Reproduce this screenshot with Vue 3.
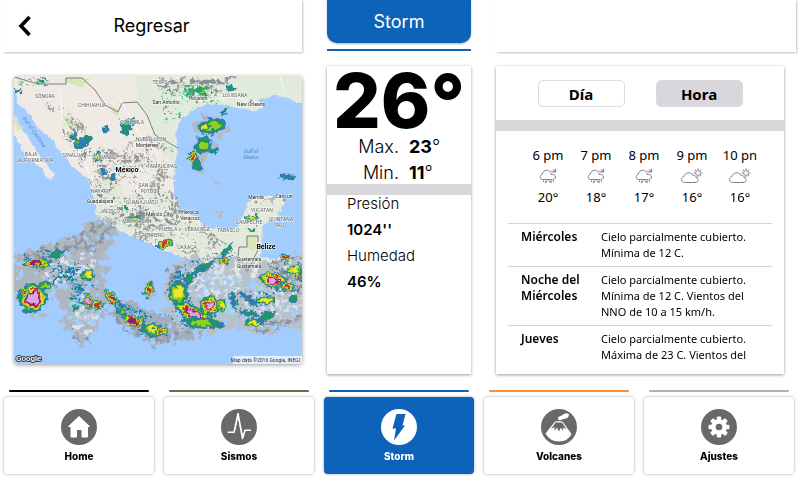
<script setup>
import { ref } from 'vue'

const mode = ref('hora')

const hours = [
  { time: '6 pm', temp: '20°', icon: 'rain' },
  { time: '7 pm', temp: '18°', icon: 'rain' },
  { time: '8 pm', temp: '17°', icon: 'rain' },
  { time: '9 pm', temp: '16°', icon: 'sun' },
  { time: '10 pn', temp: '16°', icon: 'sun' },
]

const forecast = [
  { day: 'Miércoles', text: 'Cielo parcialmente cubierto. Mínima de 12 C.' },
  { day: 'Noche del Miércoles', text: 'Cielo parcialmente cubierto. Mínima de 12 C. Vientos del NNO de 10 a 15 km/h.' },
  { day: 'Jueves', text: 'Cielo parcialmente cubierto. Máxima de 23 C. Vientos del' },
]

const tabs = [
  { id: 'home', label: 'Home' },
  { id: 'sismos', label: 'Sismos' },
  { id: 'storm', label: 'Storm' },
  { id: 'volcanes', label: 'Volcanes' },
  { id: 'ajustes', label: 'Ajustes' },
]

// Radar echoes: x, y, rx, ry, rotation, strongest band reached
const bands = ['#2f7fa8', '#1d9a5c', '#8fd020', '#f3e32a', '#c23530', '#8a1d86', '#d9a6e0']
const echoes = [
  [36, 263, 14, 4, -4, 6], [33, 298, 13, 14, 25, 7], [57, 254, 8, 3, -20, 2], [24, 292, 5, 4, 20, 5],
  [44, 286, 8, 3, -10, 3], [88, 275, 6, 5, 0, 4], [88, 301, 4, 8, -15, 7], [97, 305, 7, 4, 0, 5],
  [112, 298, 8, 4, 40, 6], [106, 292, 3, 2, 0, 3], [134, 321, 12, 5, 20, 6], [122, 312, 5, 3, 10, 3],
  [154, 330, 12, 6, 10, 4], [161, 331, 6, 4, 0, 5], [149, 290, 4, 7, 20, 5], [75, 307, 3, 3, 0, 3],
  [135, 219, 7, 3, 0, 4], [165, 244, 8, 4, -20, 5], [178, 293, 9, 11, 10, 4], [190, 278, 3, 9, 30, 2],
  [204, 267, 9, 4, -25, 2], [227, 250, 2, 9, 40, 2], [224, 260, 6, 3, 10, 5], [194, 314, 19, 7, 30, 7],
  [210, 306, 9, 9, 0, 7], [222, 305, 4, 7, 0, 4], [202, 323, 20, 5, 5, 3], [233, 300, 3, 8, -10, 1],
  [250, 300, 12, 3, 40, 1], [254, 323, 9, 4, 0, 4], [267, 316, 8, 4, -30, 2], [249, 313, 9, 3, 10, 2],
  [266, 300, 9, 4, 0, 4], [274, 280, 13, 7, 12, 7], [287, 287, 8, 4, 5, 5], [285, 257, 5, 3, 0, 5],
  [294, 270, 9, 3, -10, 4], [299, 277, 4, 3, 0, 5], [293, 298, 4, 3, 0, 2],
  [212, 126, 13, 7, -10, 3], [205, 127, 5, 3, -10, 4], [203, 145, 9, 7, -50, 3], [193, 157, 5, 4, 0, 5],
  [197, 165, 6, 5, 40, 2], [214, 151, 5, 3, 0, 2], [202, 92, 5, 3, 20, 4], [231, 88, 4, 3, 0, 2],
  [287, 177, 7, 3, 0, 1], [252, 218, 6, 3, 0, 4], [252, 230, 4, 2, 0, 3], [74, 137, 4, 3, 0, 2],
  [81, 143, 8, 4, -20, 1], [77, 143, 2, 2, 0, 3], [88, 139, 3, 3, 0, 2], [97, 157, 4, 4, 0, 4], [103, 172, 3, 3, 0, 1],
  [105, 130, 4, 3, 0, 1], [126, 128, 5, 6, 10, 2], [133, 122, 2, 3, 0, 2], [127, 208, 2, 2, 0, 2],
  [114, 178, 2, 4, 0, 1], [17, 91, 3, 2, 0, 2], [43, 82, 4, 2, 0, 2], [224, 112, 2, 4, 30, 2],
]

function layers(level) {
  return bands.slice(0, level).map((color, i) => ({ color, scale: 1.1 - (i * 0.8) / Math.max(level, 1) }))
}

const labels = [
  [45, 98, 'SONORA', 's'], [92, 107, 'CHIHUAHUA', 's'], [132, 124, 'COAHUILA', 's'], [160, 84, 'TEXAS', 's'],
  [235, 97, 'LOUISIANA', 's'], [151, 141, 'NUEVO LEON', 's'], [31, 156, 'BAJA', 's'], [34, 162, 'CALIFORNIA SUR', 's'],
  [73, 157, 'SINALOA', 's'], [105, 159, 'DURANGO', 's'], [162, 168, 'TAMAULIPAS', 's'], [101, 193, 'NAYARIT', 's'],
  [149, 187, 'SAN LUIS', 's'], [149, 193, 'POTOSI', 's'], [142, 204, 'GUANAJUATO', 's'], [110, 213, 'JALISCO', 's'],
  [137, 223, 'MICHOACAN', 's'], [152, 237, 'GUERRERO', 's'], [168, 231, 'PUEBLA', 's'], [197, 231, 'VERACRUZ', 's'],
  [228, 232, 'TABASCO', 's'], [187, 249, 'OAXACA', 's'], [262, 212, 'YUCATAN', 's'], [281, 221, 'QUINTANA', 's'],
  [281, 227, 'ROO', 's'], [249, 224, 'CAMPECHE', 's'],
  [166, 104, 'San Antonio', 'c'], [198, 100, 'Houston', 'c'], [251, 106, 'New Orleans', 'c'], [147, 147, 'Monterrey', 'c'],
  [100, 203, 'Guadalajara', 'c'], [159, 216, 'Mexico City', 'c'], [190, 214, 'Heroica', 'c'], [190, 220, 'Veracruz', 'c'],
  [256, 199, 'Merida', 'c'], [284, 198, 'Cancun', 'c'], [127, 172, 'México', 'b'], [266, 249, 'Belize', 'b'],
  [249, 261, 'Guatemala', 'c'], [249, 268, 'Guatemala', 'c'],
  [251, 153, 'Gulf of', 'w'], [251, 159, 'Mexico', 'w'],
]
</script>

<template>
  <div class="app">
    <header class="columns top">
      <div class="bar back-bar">
        <a class="back" href="#inicio" aria-label="Volver">
          <svg viewBox="0 0 14 22" width="14" height="22"><path d="M11.500 2 3 11l8.500 9" fill="none" stroke="#000" stroke-width="3.600" /></svg>
        </a>
        <h1>Regresar</h1>
      </div>
      <div class="current">
        <div class="current-tab">Storm</div>
        <div class="current-line"></div>
      </div>
      <div class="bar"></div>
    </header>

    <main class="columns">
      <figure class="map">
        <svg viewBox="14 76 288 288" preserveAspectRatio="xMidYMid slice">
          <defs>
            <filter id="rough" x="-5%" y="-5%" width="110%" height="110%">
              <feTurbulence type="fractalNoise" baseFrequency="0.2" numOctaves="2" seed="4" result="n" />
              <feDisplacementMap in="SourceGraphic" in2="n" scale="9" xChannelSelector="R" yChannelSelector="G" />
            </filter>
            <filter id="coast" x="-5%" y="-5%" width="110%" height="110%">
              <feTurbulence type="fractalNoise" baseFrequency="0.15" numOctaves="3" seed="8" result="n" />
              <feDisplacementMap in="SourceGraphic" in2="n" scale="5" xChannelSelector="R" yChannelSelector="G" />
            </filter>
            <filter id="cloud" x="-20%" y="-20%" width="140%" height="140%">
              <feTurbulence type="fractalNoise" baseFrequency="0.12" numOctaves="4" seed="11" result="n" />
              <feDisplacementMap in="SourceGraphic" in2="n" scale="20" xChannelSelector="R" yChannelSelector="G" result="d" />
              <feColorMatrix in="n" type="matrix" values="0 0 0 0 0  0 0 0 0 0  0 0 0 0 0  0 0 9 0 -3" result="m" />
              <feComposite in="d" in2="m" operator="in" />
            </filter>
            <filter id="shade" x="-20%" y="-20%" width="140%" height="140%">
              <feTurbulence type="fractalNoise" baseFrequency="0.2" numOctaves="3" seed="33" result="n" />
              <feDisplacementMap in="SourceGraphic" in2="n" scale="14" xChannelSelector="R" yChannelSelector="G" result="d" />
              <feColorMatrix in="n" type="matrix" values="0 0 0 0 0  0 0 0 0 0  0 0 0 0 0  0 6 0 0 -2.800" result="m" />
              <feComposite in="d" in2="m" operator="in" />
            </filter>
            <filter id="speck" x="0" y="0" width="100%" height="100%">
              <feTurbulence type="fractalNoise" baseFrequency="0.38" numOctaves="3" seed="21" result="n" />
              <feTurbulence type="fractalNoise" baseFrequency="0.06" numOctaves="2" seed="5" result="wide" />
              <feComposite in="n" in2="wide" operator="arithmetic" k1="0" k2=".55" k3=".55" k4="0" result="mix" />
              <feColorMatrix in="mix" type="matrix" values="0 0 0 0 0  0 0 0 0 0  0 0 0 0 0  0 11 0 0 -6" result="m" />
              <feComposite in="SourceGraphic" in2="m" operator="in" />
            </filter>
            <clipPath id="land-clip">
              <path d="M14 76V91L20 107 33 120 43 132 55 145 67 158 80 172 90 184 93 196 97 203 95 210 97 215 107 223 117 230 130 235 140 240 160 248 187 258 200 262 217 260 230 270 240 277 260 277 302 290V262L270 260 262 245 265 222 278 212 284 197H260L248 203 245 222 237 229H217L198 218 180 210 173 180 178 150 176 133 190 112 207 103 240 107 257 110 267 97 283 95 302 103V76Z" />
            </clipPath>
          </defs>

          <rect x="14" y="76" width="288" height="288" fill="#a3ccff" />
          <g filter="url(#coast)">
            <path fill="#efebe4" d="M0 60V91H15L20 107 25 110 33 120 43 132 50 137 55 145 60 150 67 158 72 167 80 172 88 180 92 188 92 195 97 203 95 208 97 215 107 223 117 230 130 235 140 240 160 248 170 252 187 258 200 262 217 260 230 270 237 276 247 277 260 277 283 282 320 290V262H302L283 257 270 260 260 257 262 245 258 235 265 222 277 220 278 212 285 202 283 196 260 196 248 202 247 213 245 222 237 228 217 230 205 227 198 218 180 210 175 197 173 180 175 163 178 150 176 133 180 120 190 112 207 103 227 105 240 108 247 105 257 111 265 106 256 100 267 97 283 95 290 100 302 103H320V60Z" />
            <path fill="#efebe4" d="M0 110 14 113 18 120 22 130 28 137 33 145 38 153 43 160 50 168 54 173 52 180 47 179 43 170 33 162 25 155 20 145 14 137H0Z" />
            <path fill="#e1ebdb" d="M135 60H320V103H302L290 100 283 95 267 97 256 100 265 106 257 111 240 108 207 103 190 112 180 120 176 133 178 150 174 165 158 145 147 115 137 102Z" />
            <path fill="#e4eadb" d="M90 185 115 175 125 195 165 190 182 212 205 229 237 229 248 203 283 197 278 218 262 225 260 257 302 263V288L247 277 200 262 130 235 97 215Z" />
            <path fill="#d5e6b8" d="M14 115 22 129 16 130ZM62 115 72 118 74 130 65 127ZM107 104 120 110 116 117ZM148 157 155 169 149 165ZM247 237 258 236 257 250 247 249ZM60 78 90 78 82 88Z" />
          </g>
          <g clip-path="url(#land-clip)">
            <g filter="url(#speck)">
              <path fill="#858a88" opacity=".8" d="M38 92 70 112 90 130 105 150 150 135 175 150 170 190 200 220 220 240 240 250 220 262 140 242 95 218 94 190 70 150 58 125Z" />
              <path fill="#888e90" d="M60 128 74 125 101 165 123 183 160 185 178 225 130 230 95 205 100 180 74 158ZM130 152 145 138 158 155 147 172Z" />
            </g>
            <path filter="url(#shade)" fill="#8b9192" d="M160 78H236L222 88 216 98 174 96 156 88ZM134 160 144 150 147 164 138 172ZM62 132 72 130 76 142 66 142ZM92 160 101 160 120 185 106 190ZM110 215 150 210 176 224 150 232 120 226Z" />
          </g>
          <g fill="none" stroke="#6e7375" stroke-width=".9">
            <path d="M14 77 38 84H66V78H82L95 90 105 105 118 112 122 103 137 102 147 115 155 135 178 148" />
            <path d="M238 258 239 247 247 247V236H258V242M258 250 252 262 246 274" />
          </g>
          <g fill="none" stroke="#fff" stroke-width=".8" opacity=".9">
            <path d="M150 85 178 78M166 107 184 96 199 101 231 97 260 103M185 76V96M214 76 224 102M280 76 285 95M118 95 147 147 135 184 159 217 191 221M101 203 135 208 159 217 187 240M60 90 62 117 78 148 97 190" />
          </g>

          <g filter="url(#cloud)">
            <path fill="#aeb6c0" d="M14 255 50 245 78 234 84 222 104 217 121 229 112 244 102 255 108 262 105 282 112 300 93 324 92 340 78 344 65 325 62 305 44 290 14 302Z" />
            <path fill="#b8c0ca" d="M169 265 185 257 205 258 230 254 255 264 302 255 310 325 285 330 265 337 245 326 220 332 185 336 168 322 164 290Z" />
            <path fill="#a4aebc" d="M108 312 118 300 136 304 150 313 168 314 180 327 205 333 185 340 150 345 128 330Z" />
            <path fill="#b3bac4" d="M192 124 204 117 220 116 230 124 224 134 200 135ZM194 145 206 134 218 148 207 157 202 172 191 168ZM210 178 218 180 219 185 211 183ZM98 252 108 256 111 261 102 260ZM30 311 46 312 47 319 25 317ZM142 280 152 276 156 293 148 300ZM278 174 299 175 297 180 282 180ZM210 212 224 212 222 216ZM265 198 276 198 276 203 265 202Z" />
          </g>
          <g filter="url(#shade)">
            <path fill="#8d959f" d="M14 262 50 247 103 222 115 232 90 260 60 268 40 272ZM70 320 94 315 90 342 76 344ZM112 312 140 330 190 334 160 346 120 332ZM166 270 180 262 176 286 166 300ZM240 325 265 320 302 290V320L265 338Z" />
            <path fill="#8d959f" d="M265 262 302 258V292L280 300Z" />
          </g>
          <g filter="url(#shade)" fill="#dbe2ea">
            <ellipse cx="70" cy="270" rx="30" ry="13" transform="rotate(-22 70 270)" />
            <ellipse cx="84" cy="318" rx="12" ry="20" />
            <ellipse cx="214" cy="283" rx="30" ry="18" />
            <ellipse cx="275" cy="305" rx="30" ry="16" />
          </g>
          <g filter="url(#speck)" fill="#9be2ed">
            <path d="M60 265 96 262 95 325 70 325 70 280 45 300ZM220 270 262 285 270 330 232 320 205 290ZM118 304 150 312 150 335 128 322ZM110 164 121 164 118 188 112 180Z" />
          </g>
          <g filter="url(#speck)" fill="#247c9c">
            <path d="M15 254 55 248 70 255 60 262 98 262 98 310 70 300ZM168 280 186 260 232 246 236 256 204 272 190 300 225 325 175 330ZM236 290 275 292 275 326 235 320ZM108 300 182 318 172 335 140 335ZM268 262 302 255V292H268Z" />
          </g>

          <g filter="url(#rough)">
            <g v-for="(e, i) in echoes" :key="i" :transform="`translate(${e[0]} ${e[1]}) rotate(${e[4]})`">
              <ellipse v-for="(l, j) in layers(e[5])" :key="j" :rx="e[2] * l.scale" :ry="e[3] * l.scale" :fill="l.color" />
            </g>
          </g>
          <g clip-path="url(#land-clip)">
            <path filter="url(#speck)" fill="#1fa362" opacity=".8" d="M15 77 55 77 60 83 20 87ZM160 85H215L222 110 216 120 213 105 180 118 165 125ZM118 118 134 118 134 138 120 133Z" />
          </g>

          <text v-for="(t, i) in labels" :key="i" :x="t[0]" :y="t[1]" :class="['place', t[3]]">{{ t[2] }}</text>
          <text class="place w" transform="translate(33 133) rotate(55)">Gulf of California</text>
          <g fill="#fff" stroke="#555" stroke-width=".7">
            <circle cx="166" cy="107" r="1" /><circle cx="197" cy="102" r="1" /><circle cx="251" cy="101" r="1" />
            <circle cx="147" cy="150" r="1" /><circle cx="256" cy="202" r="1" /><circle cx="284" cy="200" r="1" />
            <circle cx="247" cy="270" r="1.200" /><circle cx="190" cy="222" r="1" />
          </g>
          <text class="brand" x="16" y="361">Google</text>
          <rect x="233" y="356" width="69" height="8" fill="#f4f7fb" opacity=".8" />
          <text class="credit" x="300" y="362">Map data ©2016 Google, INEGI</text>
        </svg>
      </figure>

      <section class="panel now">
        <p class="temp">26°</p>
        <dl class="range">
          <dt>Max.</dt><dd><b>23</b>°</dd>
          <dt>Min.</dt><dd><b>11</b>°</dd>
        </dl>
        <div class="divider"></div>
        <dl class="stats">
          <dt>Presión</dt><dd>1024''</dd>
          <dt>Humedad</dt><dd>46%</dd>
        </dl>
      </section>

      <section class="panel forecast">
        <div class="switch">
          <button type="button" :class="{ on: mode === 'dia' }" @click="mode = 'dia'">Día</button>
          <button type="button" :class="{ on: mode === 'hora' }" @click="mode = 'hora'">Hora</button>
        </div>
        <div class="divider"></div>
        <ul class="hours">
          <li v-for="h in hours" :key="h.time">
            <span>{{ h.time }}</span>
            <svg v-if="h.icon === 'rain'" viewBox="0 0 24 16" width="24" height="16" fill="none" stroke="#777" stroke-width=".9">
              <path d="M7 11.500C3.500 11.500 3 7 6.300 6.300 6.500 2.500 11 .8 13.500 3.500 15 5 15 5.500 15 6.500 16 5.800 19.500 6.500 19.500 9 19.500 11 18 11.500 16.500 11.500Z" />
              <path d="M14.500 2.500 16.500 4.500M19.500.8V3M17 1.500 20 5M20 1.500 17 5M16.500 3.200H20.500" stroke-width=".8" />
              <path d="M7.500 12.500V14M10.500 12.500 9.500 15M13 12.500V14M15.500 12.500 14.500 15M17.500 12.500V14" stroke-width="1.200" />
            </svg>
            <svg v-else viewBox="0 0 24 16" width="24" height="16" fill="none" stroke="#777" stroke-width=".9">
              <path d="M4.500 14.500C.7 14.500.2 9.300 4 8.700 4.500 4.500 10.500 3 12.800 7.300 15 6.800 16.500 8.500 16.300 10 19 10.500 18.500 14.500 16 14.500Z" />
              <circle cx="18" cy="5" r="2.400" />
              <path d="M18 .5V1.700M18 8.300V9.500M13.500 5H14.700M21.300 5H22.500M14.800 1.800 15.700 2.700M20.300 7.300 21.200 8.200M21.200 1.800 20.300 2.700" stroke-width="1.200" />
            </svg>
            <span>{{ h.temp }}</span>
          </li>
        </ul>
        <table>
          <tbody>
            <tr v-for="f in forecast" :key="f.day">
              <th scope="row">{{ f.day }}</th>
              <td>{{ f.text }}</td>
            </tr>
          </tbody>
        </table>
      </section>
    </main>

    <nav>
      <a v-for="t in tabs" :key="t.id" :href="'#' + t.id" :class="['tab', t.id]">
        <span class="accent"></span>
        <span class="tile">
          <svg viewBox="0 0 36 36" width="36" height="36">
            <circle class="disc" cx="18" cy="18" r="18" />
            <path v-if="t.id === 'home'" fill="#fff" stroke="#fff" stroke-width="1" stroke-linejoin="round" d="M18 7.500 28.500 17.500H26.500V28H21V20.500H15.500V28H10V17.500H7.500Z" />
            <g v-else-if="t.id === 'sismos'" fill="none" stroke="#fff" stroke-linejoin="round">
              <path stroke-width="1.600" d="M6.500 23.300H13L17 4.500 21.500 29.500 24 21.300H30" />
              <path stroke-width="1" d="M13.500 22 17 7 21.500 27" />
            </g>
            <path v-else-if="t.id === 'storm'" fill="#0d62ba" d="M15.500 5H24.500L21.500 16.500H24L13 31.500 15 19.500H11.500Z" />
            <g v-else-if="t.id === 'volcanes'" fill="#fff">
              <path d="M14 12.500Q18 11.500 21.500 12.500L30.500 25Q27 32.500 18 32.500T4.500 24.500Z" />
              <path fill="#696969" d="M14.500 13.500H21L25.500 20 22.500 18.500 22 21.500 19.800 18.800 18 22.500 16 18.800 13.500 21.500 13.300 18 10 20Z" />
              <path d="M17 10.500Q16.500 7 21 6.500 25 2.800 28 5.500 28 9.500 22.500 10 19.500 11.500 18 11Z" />
            </g>
            <g v-else fill="#fff">
              <circle cx="18" cy="18" r="7.800" />
              <rect v-for="a in 8" :key="a" x="15.800" y="7.500" width="4.400" height="6" rx="1.200" :transform="`rotate(${a * 45} 18 18)`" />
              <circle cx="18" cy="18" r="3.300" fill="#696969" />
            </g>
          </svg>
          <span class="name">{{ t.label }}</span>
        </span>
      </a>
    </nav>
  </div>
</template>

<style>
body {
  background: #fff;
}
</style>

<style scoped>
.app {
  color: #000;
  font-family: Inter, "Liberation Sans", sans-serif;
}
h1, p, dl, dd, ul, figure {
  margin: 0;
  padding: 0;
}
a {
  color: inherit;
  text-decoration: none;
}
.columns {
  display: grid;
  grid-template-columns: 299fr 144fr 300fr;
  gap: 25px;
  padding: 0 3px;
}
.top {
  margin-bottom: 14px;
}
.bar {
  height: 52px;
  box-shadow: 1px 1px 2px rgba(0, 0, 0, .25);
}
.back-bar {
  display: grid;
  grid-template-columns: 46px 1fr 48px;
  align-items: center;
}
.back {
  display: flex;
  padding-left: 15px;
}
h1 {
  font-size: 18px;
  line-height: 24px;
  font-weight: 400;
  text-align: center;
}
.current {
  display: flex;
  flex-direction: column;
  gap: 6px;
}
.current-tab {
  height: 43px;
  background: #0d62ba;
  border-radius: 0 0 10px 10px;
  box-shadow: 0 1px 2px rgba(0, 0, 0, .3);
  color: #fff;
  font-size: 18px;
  line-height: 43px;
  text-align: center;
}
.current-line {
  height: 2px;
  background: #0d62ba;
}
.map {
  margin: 10px 0 10px 11px;
  border-radius: 4px;
  box-shadow: 0 1px 4px rgba(0, 0, 0, .4);
  overflow: hidden;
}
.map svg {
  display: block;
  width: 100%;
  aspect-ratio: 1;
}
.place {
  fill: #4f5356;
  font-family: Roboto, sans-serif;
  font-size: 5px;
  text-anchor: middle;
  stroke: rgba(255, 255, 255, .7);
  stroke-width: 1px;
  paint-order: stroke;
}
.place.s {
  fill: #5d6062;
}
.place.c {
  fill: #222;
}
.place.b {
  fill: #000;
  font-size: 7px;
  font-weight: 700;
}
.place.w {
  fill: #4f86c6;
  font-style: italic;
  stroke: none;
}
.brand {
  fill: #fff;
  stroke: #333f50;
  stroke-width: 2px;
  paint-order: stroke;
  font-family: Roboto, sans-serif;
  font-size: 8px;
  font-weight: 500;
}
.credit {
  fill: #333;
  font-family: Roboto, sans-serif;
  font-size: 5px;
  text-anchor: end;
}
.panel {
  background: #fff;
  box-shadow: 0 1px 3px rgba(0, 0, 0, .4);
}
.divider {
  height: 11px;
  background: #d8d7dc;
}
.temp {
  font-size: 75px;
  line-height: 70px;
  font-weight: 800;
  text-align: center;
}
.range {
  display: grid;
  grid-template-columns: 72fr 62fr;
  gap: 4px 10px;
  font-size: 18px;
  line-height: 22px;
  font-weight: 300;
}
.range dt {
  text-align: right;
}
.range b {
  font-weight: 700;
}
.stats {
  display: flex;
  flex-direction: column;
  gap: 8px;
  padding-left: 20px;
  font-size: 15px;
  line-height: 18px;
  font-weight: 300;
}
.stats dd {
  font-weight: 600;
}
.forecast {
  margin-right: 12px;
  font-family: "Noto Sans", "Open Sans", sans-serif;
}
.switch {
  display: flex;
  justify-content: center;
  gap: 31px;
  padding: 14px 0 13px;
}
.switch button {
  width: 87px;
  height: 27px;
  padding: 0;
  border: 1px solid #dcdcdf;
  border-radius: 5px;
  background: #fff;
  color: #000;
  font-family: "Noto Sans", sans-serif;
  font-size: 15px;
  font-weight: 700;
}
.switch button.on {
  background: #d8d7dc;
}
.hours {
  display: grid;
  grid-template-columns: repeat(5, 48px);
  justify-content: center;
  padding: 14px 0 16px 8px;
  list-style: none;
  font-size: 13px;
  line-height: 20px;
}
.hours li {
  display: flex;
  flex-direction: column;
  align-items: center;
  gap: 3px;
  white-space: nowrap;
}
table {
  width: calc(100% - 24px);
  margin: 0 12px;
  border-collapse: collapse;
  font-size: 11px;
  line-height: 16px;
}
th, td {
  border-top: 1px solid #d4d4d6;
  vertical-align: top;
  text-align: left;
}
th {
  width: 67px;
  padding: 5px 0 5px 13px;
  font-size: 12px;
  font-weight: 600;
}
td {
  padding: 5px 12px 5px 13px;
}
nav {
  display: grid;
  grid-template-columns: repeat(5, 1fr);
  gap: 10px;
  padding: 16px 5px 5px 4px;
}
.tab {
  display: flex;
  flex-direction: column;
  gap: 5px;
}
.accent {
  height: 2px;
  margin: 0 5px;
  border-radius: 1px;
  background: #000;
}
.sismos .accent { background: #736b45; }
.storm .accent { background: #0d62ba; }
.volcanes .accent { background: #ff8d3a; }
.ajustes .accent { background: #b0b0b0; }
.tile {
  display: flex;
  flex-direction: column;
  align-items: center;
  gap: 4px;
  padding: 12px 0 10px;
  border-radius: 4px;
  background: #fff;
  box-shadow: 0 0 3px rgba(0, 0, 0, .35);
}
.disc {
  fill: #696969;
}
.name {
  font-size: 10px;
  line-height: 15px;
  font-weight: 800;
}
.storm .tile {
  background: #0d62ba;
  color: #fff;
}
.storm .disc {
  fill: #fff;
}
</style>
